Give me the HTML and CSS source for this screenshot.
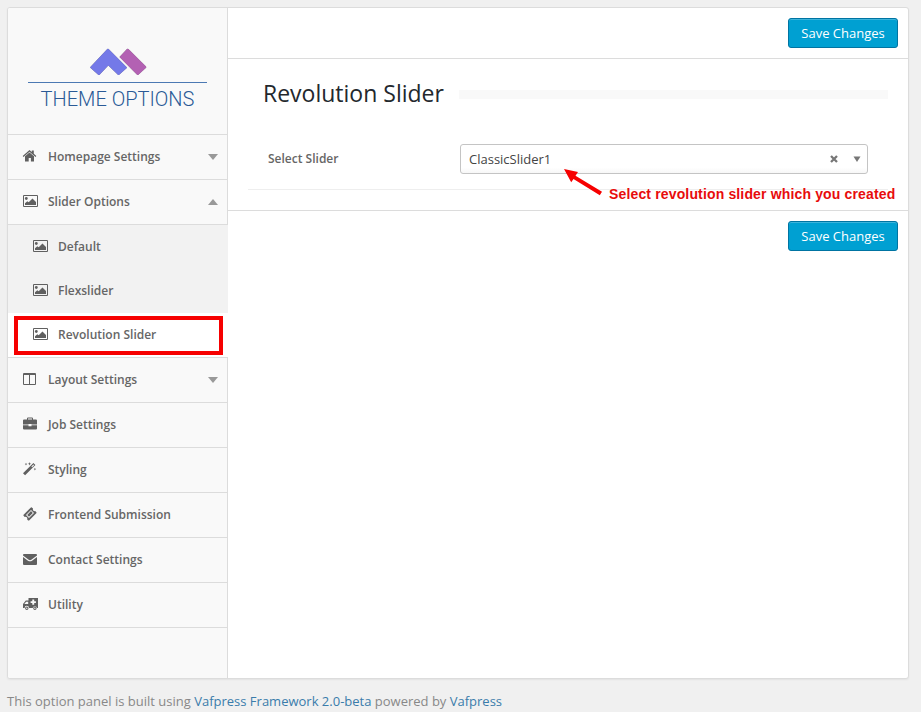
FILE: index.html
```html
<!DOCTYPE html>
<html lang="en">
<head>
<meta charset="utf-8">
<title>Theme Options</title>
<link rel="stylesheet" href="styles.css">
</head>
<body>
<svg class="defs" aria-hidden="true">
  <symbol id="picture" viewBox="0 0 16 14">
    <path fill="none" stroke="currentColor" d="M1.500 1.500h14v11h-14z"/>
    <circle cx="4.300" cy="4.500" r="1.400"/>
    <path d="M3 11V9.200l2.300-2 1.400 1L10.500 4.600 14 8v3z"/>
  </symbol>
  <symbol id="home" viewBox="0 0 16 14">
    <path d="M7.5 3.500 12 7.300v5.200H8.900V8.900H6.700v3.600H3V7.300z"/>
    <path d="M7.500 1 9.800 3V1.600h2v3.100L14.300 7l-.8.900-6-5.100-6 5.100-.8-.9z"/>
  </symbol>
  <symbol id="columns" viewBox="0 0 16 14">
    <path fill-rule="evenodd" d="M2 1h11q1 0 1 1v10q0 1-1 1H2q-1 0-1-1V2q0-1 1-1zm0 2v9h5V3zm6 0v9h5V3z"/>
  </symbol>
  <symbol id="briefcase" viewBox="0 0 16 14">
    <path fill-rule="evenodd" d="M5 2.500V1.500q0-1 1-1h4q1 0 1 1v1h3q1 0 1 1v4H9.500V7h-3v.5H1v-4q0-1 1-1zm1-1v1h4v-1z"/>
    <path d="M1 8.200h5.500v1h3v-1H15v3.300q0 1-1 1H2q-1 0-1-1z"/>
  </symbol>
  <symbol id="magic" viewBox="0 0 16 14">
    <path fill-rule="evenodd" d="M1 11.300 11.400 1l2 2L3.100 13.200zM9.400 4.500l.7.700 2-2-.7-.7z"/>
    <path d="M4 .8l.4 1 .9.300-.9.400-.4.900-.4-.9-.9-.4.900-.3zM7.500 0l.5 1.400 1.300.4-1.300.5-.5 1.300L7 2.300l-1.300-.5L7 1.400zM12.900 5.800l.4 1 .9.300-.9.400-.4.900-.4-.9-.9-.4.900-.3z"/>
  </symbol>
  <symbol id="ticket" viewBox="0 0 16 14">
    <path fill-rule="evenodd" d="M9.800.4 11 1.600q-.4 1.400.5 2.100.7.700 1.700.4l1.100 1.100q.5.500 0 1L7.100 13.400q-.5.400-1 0l-1-1.100q.5-1.200-.4-2-.8-.8-2-.4L1.600 8.800q-.5-.5 0-1L8.900.4q.5-.4.900 0zM9 2.900 4 7.900l3 3 5-5zm0 1.200 1.800 1.800L7 9.700 5.200 7.900z"/>
  </symbol>
  <symbol id="mail" viewBox="0 0 16 14">
    <path d="M2 2h12q1 0 1 1v.5L9.300 7.700q-1.300.9-2.600 0L1 3.500V3q0-1 1-1z"/>
    <path d="M1 5l5 3.700q2 1.300 4 0L15 5v7q0 1-1 1H2q-1 0-1-1z"/>
  </symbol>
  <symbol id="ambulance" viewBox="0 0 16 14">
    <path fill-rule="evenodd" d="M6.500 1H16v10h-1a2.200 2.200 0 0 0-4.300 0H7A2.200 2.200 0 0 0 2.600 11H1V7l2.800-3.500h2.700zM4.200 4.700 2.300 7h3.900V4.700zM10.300 2.500v1.700H8.600v1.900h1.700v1.700h1.900V6.100h1.700V4.200h-1.700V2.500z"/>
    <path fill-rule="evenodd" d="M4.800 9.600a1.700 1.700 0 1 1 0 3.400 1.700 1.700 0 0 1 0-3.400zm0 1a.7.7 0 1 0 0 1.400.7.7 0 0 0 0-1.400zM12.900 9.600a1.700 1.700 0 1 1 0 3.400 1.700 1.700 0 0 1 0-3.400zm0 1a.7.7 0 1 0 0 1.400.7.7 0 0 0 0-1.400z"/>
  </symbol>
</svg>

<div class="panel">
  <aside class="sidebar">
    <div class="brand">
      <svg class="logo" width="60" height="30" viewBox="0 0 60 30">
        <g class="logo-mark">
          <path fill="#b361b3" d="M38 1q.7-.6 1.400 0L57 18.500q.6.700 0 1.300l-7.600 7q-.7.600-1.300 0L30.500 9z"/>
          <path fill="#7479e8" d="M18.300 1q.7-.6 1.300 0l17.900 18q.6.700 0 1.300l-7.300 6.500q-.6.600-1.300 0L19.300 17.500l-8.700 9.200q-.7.700-1.400 0L1.600 20q-.7-.6 0-1.300z"/>
        </g>
      </svg>
      <div class="brand-name">THEME OPTIONS</div>
    </div>
    <nav>
      <a class="item"><svg class="icon"><use href="#home"/></svg>Homepage Settings<i class="caret"></i></a>
      <a class="item"><svg class="icon"><use href="#picture"/></svg>Slider Options<i class="caret up"></i></a>
      <div class="submenu">
        <a class="subitem"><svg class="icon"><use href="#picture"/></svg>Default</a>
        <a class="subitem"><svg class="icon"><use href="#picture"/></svg>Flexslider</a>
        <a class="subitem current"><svg class="icon"><use href="#picture"/></svg>Revolution Slider<span class="highlight"></span></a>
      </div>
      <a class="item"><svg class="icon"><use href="#columns"/></svg>Layout Settings<i class="caret"></i></a>
      <a class="item"><svg class="icon"><use href="#briefcase"/></svg>Job Settings</a>
      <a class="item"><svg class="icon"><use href="#magic"/></svg>Styling</a>
      <a class="item"><svg class="icon"><use href="#ticket"/></svg>Frontend Submission</a>
      <a class="item"><svg class="icon"><use href="#mail"/></svg>Contact Settings</a>
      <a class="item"><svg class="icon"><use href="#ambulance"/></svg>Utility</a>
    </nav>
  </aside>
  <main class="content">
    <div class="bar top"><button class="save">Save Changes</button></div>
    <section class="options">
      <h2 class="title"><span class="title-text">Revolution Slider</span></h2>
      <div class="field">
        <label class="label">Select Slider</label>
        <div class="select">
          <span class="value">ClassicSlider1</span>
          <svg class="clear" width="8" height="8" viewBox="0 0 8 8"><path d="M1 1l6 6M7 1 1 7"/></svg>
          <svg class="drop" width="8" height="6" viewBox="0 0 8 6"><path d="M.5.500h7L4 6z"/></svg>
        </div>
      </div>
      <div class="note">
        <svg class="arrow" width="40" height="28" viewBox="0 0 40 28"><path d="M0 0 14 3 11.500 6.800 38 22.800 35.800 26.200 9.500 10 7.200 13.300z"/></svg>
        <span class="note-text">Select revolution slider which you created</span>
      </div>
    </section>
    <div class="bar"><button class="save">Save Changes</button></div>
  </main>
</div>
<footer class="footer">This option panel is built using <a>Vafpress Framework 2.0-beta</a> powered by <a>Vafpress</a></footer>
</body>
</html>
```
FILE: styles.css
```css
* { box-sizing: border-box; }
body {
  margin: 0;
  padding: 7px 12px 0 7px;
  height: 712px;
  overflow: hidden;
  background: #f0f0f0;
  font-family: "Open Sans", sans-serif;
  font-size: 13px;
  color: #666;
}
.defs { position: absolute; width: 0; height: 0; }
.panel {
  display: flex;
  height: 672px;
  border: 1px solid #dcdcdc;
  border-radius: 3px;
  background: #fff;
  box-shadow: 0 1px 2px rgba(0, 0, 0, .06);
  overflow: hidden;
}
.sidebar {
  flex: none;
  width: 220px;
  background: linear-gradient(to left, #dcdcdc 1px, #f9f9f9 1px);
}
.brand {
  height: 127px;
  padding: 40px 20px 0;
  border-bottom: 1px solid #dcdcdc;
  color: #2a5a96;
}
.logo { display: block; margin-left: 61px; }
.logo-mark { filter: drop-shadow(.7px .7px .5px rgba(0, 0, 0, .55)); }
.brand-name {
  width: 179px;
  margin-top: 4px;
  border-top: 1px solid #4c79b3;
  font: 300 20px/32px Roboto, sans-serif;
  text-align: center;
  white-space: nowrap;
}
.item, .subitem {
  display: flex;
  align-items: center;
  font-size: 12px;
  font-weight: 600;
}
.item {
  height: 45px;
  padding: 0 10px 1px 14px;
  border-bottom: 1px solid #dcdcdc;
}
.icon {
  flex: none;
  width: 16px;
  height: 14px;
  margin: 0 10px 2px 0;
  fill: currentColor;
  color: #606060;
}
.subitem .icon { margin-bottom: 0; }
.caret {
  margin-left: auto;
  border: 5px solid transparent;
  border-top: 6px solid #999;
  border-bottom: 0;
}
.caret.up { border-top: 0; border-bottom: 6px solid #999; }
.submenu { border-bottom: 1px solid #dcdcdc; background: #f2f2f2; }
.subitem { position: relative; height: 44px; padding: 0 0 2px 24px; }
.current { background: #fff; }
.highlight {
  position: absolute;
  left: 6px;
  top: 3px;
  width: 209px;
  height: 39px;
  border: 4px solid #f60000;
}
.content { flex: 1; }
.bar { display: flex; justify-content: flex-end; padding: 10px; }
.top { height: 51px; border-bottom: 1px solid #dcdcdc; }
.save {
  width: 110px;
  height: 30px;
  padding: 0;
  border: 1px solid #0074a2;
  border-radius: 3px;
  background: #00a0d2;
  box-shadow: inset 0 1px 0 rgba(120, 200, 230, .5);
  color: #fff;
  font: 13px/28px "Open Sans", sans-serif;
}
.options { height: 152px; border-bottom: 1px solid #dcdcdc; }
.title {
  display: flex;
  align-items: center;
  gap: 15px;
  height: 70px;
  margin: 0;
  padding: 0 20px 0 35px;
  color: #23282d;
  font-size: 23px;
  font-weight: 400;
}
.title-text { padding-bottom: 2px; }
.title::after { content: ""; flex: 1; height: 9px; background: #f9f9f9; }
.field {
  display: flex;
  align-items: center;
  height: 61px;
  margin: 0 20px;
  padding: 0 20px;
  border-bottom: 1px solid #eee;
}
.label { width: 192px; padding-bottom: 2px; font-size: 12px; font-weight: 600; }
.select {
  display: flex;
  align-items: center;
  flex: 1;
  height: 30px;
  padding: 0 6px 0 8px;
  border: 1px solid #c4c4c4;
  border-radius: 3px;
  background: linear-gradient(to top, #f7f7f7, #fff 20%);
  color: #444;
}
.value { flex: 1; }
.clear { margin-right: 15px; stroke: #777; stroke-width: 2.300; }
.drop { fill: #777; }
.note { position: relative; }
.arrow { position: absolute; left: 336px; top: -21px; fill: #f60000; }
.note-text {
  position: absolute;
  left: 381px;
  top: -5px;
  color: #e80c0c;
  font: bold 14px/18px "Liberation Sans", sans-serif;
  letter-spacing: .15px;
  white-space: nowrap;
}
.footer { margin-top: 13px; color: #888; line-height: 18px; }
.footer a { color: #3a7cab; }
```
